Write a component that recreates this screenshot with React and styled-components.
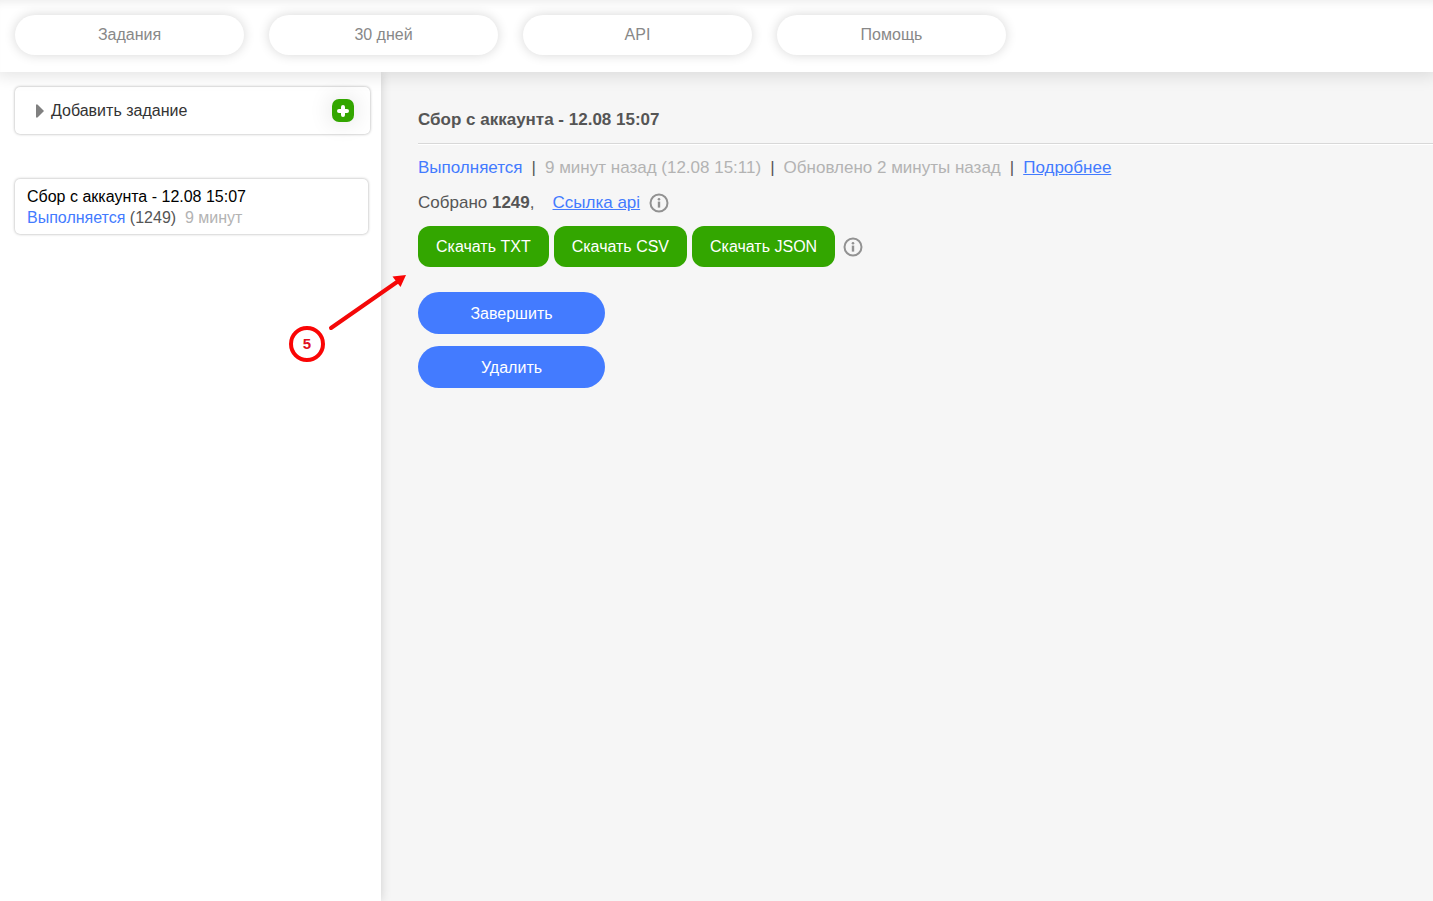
import React from "react";
import styled, { createGlobalStyle } from "styled-components";

const GlobalStyle = createGlobalStyle`
  * {
    box-sizing: border-box;
  }
  body {
    margin: 0;
    background: #f6f6f6;
    color: #555;
    font-family: "Liberation Sans", Arial, sans-serif;
    font-size: 16px;
  }
  button {
    font-family: inherit;
    cursor: pointer;
  }
`;

const Page = styled.div`
  position: relative;
  display: flex;
  flex-direction: column;
  min-height: 100vh;
  overflow: hidden;
`;

const Header = styled.header`
  z-index: 1;
  padding: 15px 15px 17px;
  background: #fff;
  box-shadow: 0 0 16px 4px rgba(0, 0, 0, 0.11), inset 0 8px 8px -6px rgba(0, 0, 0, 0.08);
`;

const Nav = styled.nav`
  display: flex;
  gap: 25px;
`;

const NavLink = styled.a`
  flex: 0 1 229px;
  height: 40px;
  border-radius: 20px;
  background: #fff;
  box-shadow: 0 0 12px rgba(0, 0, 0, 0.16);
  color: #888;
  line-height: 39px;
  text-align: center;
  text-decoration: none;
`;

const Body = styled.div`
  display: flex;
  flex: 1;
`;

const Sidebar = styled.aside`
  flex: 0 0 381px;
  padding: 15px 11px 0 15px;
  background: #fff;
  box-shadow: 0 0 10px rgba(0, 0, 0, 0.16);
`;

const AddTask = styled.details`
  border-radius: 5px;
  background: #fff;
  box-shadow: 0 0 3px rgba(0, 0, 0, 0.35);
`;

const AddSummary = styled.summary`
  display: flex;
  align-items: center;
  gap: 7px;
  height: 47px;
  padding: 0 16px 0 21px;
  color: #333;
  list-style: none;
  cursor: pointer;
`;

const PlusBadge = styled.span`
  display: flex;
  align-items: center;
  justify-content: center;
  width: 22px;
  height: 23px;
  margin-left: auto;
  border-radius: 7px;
  background: #33a600;
  box-shadow: 0 0 24px rgba(0, 0, 0, 0.14);
`;

const TaskCard = styled.article`
  margin: 45px 2px 0 0;
  padding: 7px 12px 6px;
  border-radius: 5px;
  background: #fff;
  box-shadow: 0 0 3px rgba(0, 0, 0, 0.35);
  line-height: 21px;
`;

const TaskName = styled.div`
  color: #000;
`;

const Main = styled.main`
  flex: 1;
  min-width: 0;
  padding: 36px 0 0 37px;
`;

const Title = styled.h1`
  margin: 0;
  font-size: 17px;
  line-height: 24px;
`;

const Divider = styled.hr`
  margin: 11px 0;
  border: 0;
  border-top: 1px solid #d8d8d8;
  border-bottom: 1px solid #fff;
`;

const Line = styled.div`
  display: flex;
  align-items: center;
  flex-wrap: wrap;
  gap: 9px;
  margin-bottom: 11px;
  font-size: 17px;
  line-height: 24px;
`;

const Status = styled.span`
  color: #437bff;
`;

const Muted = styled.span`
  color: #b3b3b3;
`;

const Link = styled.a`
  margin-left: ${(props) => (props.$spaced ? "9px" : "0")};
  color: #437bff;
`;

const Downloads = styled.div`
  display: flex;
  align-items: center;
  flex-wrap: wrap;
  gap: 8px;
`;

const ButtonGroup = styled.div`
  display: flex;
  flex-wrap: wrap;
  gap: 5px;
`;

const DownloadButton = styled.button`
  height: 41px;
  padding: 0 18px;
  border: 0;
  border-radius: 12px;
  background: #33a600;
  color: #fff;
  font-size: 16px;
`;

const Actions = styled.div`
  display: flex;
  flex-direction: column;
  gap: 12px;
  width: 187px;
  margin-top: 25px;
`;

const ActionButton = styled.button`
  height: 42px;
  padding: 2px 0 0;
  border: 0;
  border-radius: 21px;
  background: #437bff;
  color: #fff;
  font-size: 16px;
`;

const InfoSvg = styled.svg`
  flex: none;
  display: block;
`;

// callout marker that floats over the page
const Marker = styled.div`
  position: absolute;
  z-index: 2;
  top: 272px;
  left: 286px;
  pointer-events: none;
`;

const MarkerNumber = styled.span`
  position: absolute;
  top: 54px;
  left: 3px;
  width: 36px;
  height: 36px;
  border: 4px solid #fa0505;
  border-radius: 50%;
  color: #e01020;
  font-size: 15px;
  font-weight: bold;
  line-height: 28px;
  text-align: center;
`;

const Info = () => (
  <InfoSvg width="20" height="20" viewBox="0 0 20 20">
    <circle cx="10" cy="10" r="8.5" fill="none" stroke="#929292" strokeWidth="2" />
    <circle cx="10" cy="6.2" r="1.3" fill="#929292" />
    <path d="M10 8.6v6" stroke="#929292" strokeWidth="2.4" />
  </InfoSvg>
);

const navItems = ["Задания", "30 дней", "API", "Помощь"];
const formats = ["TXT", "CSV", "JSON"];

const App = () => {
  return (
    <>
      <GlobalStyle />
      <Page>
        <Header>
          <Nav>
            {navItems.map((item) => (
              <NavLink href="#" key={item}>
                {item}
              </NavLink>
            ))}
          </Nav>
        </Header>
        <Body>
          <Sidebar>
            <AddTask>
              <AddSummary>
                <svg width="8" height="14" viewBox="0 0 8 14">
                  <path d="M0 0.5H1.5L8 7L1.5 13.5H0Z" fill="#808080" />
                </svg>
                Добавить задание
                <PlusBadge>
                  <svg width="12" height="12" viewBox="0 0 12 12">
                    <path d="M6 2v8M2 6h8" stroke="#fff" strokeWidth="4" strokeLinecap="round" />
                  </svg>
                </PlusBadge>
              </AddSummary>
            </AddTask>
            <TaskCard>
              <TaskName>Сбор с аккаунта - 12.08 15:07</TaskName>
              <Status>Выполняется</Status> (1249)&nbsp; <Muted>9 минут</Muted>
            </TaskCard>
          </Sidebar>
          <Main>
            <Title>Сбор с аккаунта - 12.08 15:07</Title>
            <Divider />
            <Line>
              <Status>Выполняется</Status>
              <span>|</span>
              <Muted>9 минут назад (12.08 15:11)</Muted>
              <span>|</span>
              <Muted>Обновлено 2 минуты назад</Muted>
              <span>|</span>
              <Link href="#">Подробнее</Link>
            </Line>
            <Line>
              <span>
                Собрано <b>1249</b>,
              </span>
              <Link href="#" $spaced>
                Ссылка api
              </Link>
              <Info />
            </Line>
            <Downloads>
              <ButtonGroup>
                {formats.map((format) => (
                  <DownloadButton type="button" key={format}>
                    Скачать {format}
                  </DownloadButton>
                ))}
              </ButtonGroup>
              <Info />
            </Downloads>
            <Actions>
              <ActionButton type="button">Завершить</ActionButton>
              <ActionButton type="button">Удалить</ActionButton>
            </Actions>
          </Main>
        </Body>
        <Marker>
          <svg width="124" height="92" viewBox="0 0 124 92">
            <path d="M45 56L111 10" stroke="#f40808" strokeWidth="4" strokeLinecap="round" />
            <path d="M120 3L114.5 15L106.500 4.500Z" fill="#fa0505" />
          </svg>
          <MarkerNumber>5</MarkerNumber>
        </Marker>
      </Page>
    </>
  );
};

export default App;
